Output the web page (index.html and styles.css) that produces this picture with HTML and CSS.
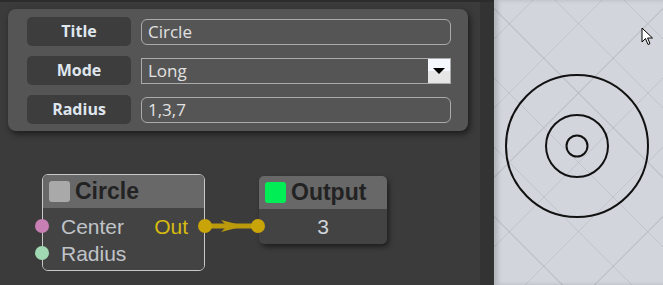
FILE: index.html
```html
<!DOCTYPE html>
<html lang="en">
<head>
    <meta charset="UTF-8">
    <title>Node Editor</title>
    <link rel="stylesheet" href="styles.css">
</head>
<body>
    <div class="editor">
        <div class="props">
            <div class="prop-row">
                <div class="prop-label">Title</div>
                <div class="prop-input">Circle</div>
            </div>
            <div class="prop-row">
                <div class="prop-label">Mode</div>
                <div class="prop-input prop-select">
                    <span>Long</span>
                    <span class="select-btn"><span class="select-arrow"></span></span>
                </div>
            </div>
            <div class="prop-row">
                <div class="prop-label">Radius</div>
                <div class="prop-input">1,3,7</div>
            </div>
        </div>

        <!-- link between nodes -->
        <svg class="links" width="494" height="285">
            <line x1="206" y1="226" x2="259" y2="226" stroke="#bb9a0c" stroke-width="5"/>
            <polygon points="221,220 244,226 221,232 227,226" fill="#bb9a0c"/>
        </svg>

        <div class="node node-circle">
            <div class="node-head">
                <span class="node-check"></span>
                <span class="node-title">Circle</span>
            </div>
            <div class="node-body">
                <div class="node-row">
                    <span class="port port-in port-pink"></span>
                    <span>Center</span>
                    <span class="out-label">Out</span>
                    <span class="port port-out"></span>
                </div>
                <div class="node-row">
                    <span class="port port-in port-green"></span>
                    <span>Radius</span>
                </div>
            </div>
        </div>

        <div class="node node-output">
            <div class="node-head">
                <span class="node-check check-on"></span>
                <span class="node-title">Output</span>
            </div>
            <div class="node-body">
                <div class="node-row value-row">
                    <span class="port port-in port-yellow"></span>
                    <span>3</span>
                </div>
            </div>
        </div>
    </div>

    <div class="preview">
        <svg class="rings" width="169" height="285">
            <circle cx="83" cy="146" r="71" fill="none" stroke="#111" stroke-width="2"/>
            <circle cx="83" cy="146" r="31" fill="none" stroke="#111" stroke-width="2"/>
            <circle cx="83" cy="146" r="10.5" fill="none" stroke="#111" stroke-width="2"/>
        </svg>
        <svg class="cursor" width="14" height="20" viewBox="0 0 14 20">
            <path d="M1 1 L1 15 L4.5 11.5 L7 17.5 L9 16.6 L6.6 11 L11.5 11 Z" fill="#fff" stroke="#000" stroke-width="1"/>
        </svg>
    </div>
</body>
</html>
```

FILE: styles.css
```css
:root {
    --editor-bg: #3b3b3b;
    --panel-bg: #555;
    --label-bg: #3d3d3d;
    --node-head: #686868;
    --node-body: #434343;
    --link-color: #c9a408;
}

body {
    margin: 0;
    display: flex;
    width: 663px;
    height: 285px;
    overflow: hidden;
    font-family: 'Open Sans', sans-serif;
}

.editor {
    position: relative;
    width: 494px;
    height: 285px;
    background-color: var(--editor-bg);
    border-top: 2px solid #2c2c2c;
    box-sizing: border-box;
    box-shadow: inset -14px 0 0 #333;
}

/* Property panel */
.props {
    margin: 7px 0 0 8px;
    width: 460px;
    height: 122px;
    box-sizing: border-box;
    padding: 8px 17px 7px 19px;
    background-color: var(--panel-bg);
    border-radius: 8px;
    box-shadow: 2px 3px 6px rgba(0, 0, 0, 0.55);
    display: flex;
    flex-direction: column;
    gap: 10px;
}

.prop-row {
    display: flex;
    align-items: center;
    gap: 10px;
    height: 29px;
}

.prop-label {
    width: 104px;
    height: 29px;
    line-height: 29px;
    text-align: center;
    background-color: var(--label-bg);
    border-radius: 5px;
    color: #dfe6ee;
    font-weight: bold;
    font-size: 16px;
}

.prop-input {
    width: 310px;
    height: 26px;
    box-sizing: border-box;
    border: 1px solid #aaa;
    border-radius: 6px;
    padding: 0 6px;
    line-height: 24px;
    color: #e2e2e2;
    font-size: 17px;
}

.prop-select {
    display: flex;
    justify-content: space-between;
    border-radius: 0;
    padding-right: 0;
}

.select-btn {
    width: 22px;
    height: 24px;
    background: linear-gradient(#f6f8ff 50%, #e6e6e6 50%);
    display: flex;
    align-items: center;
    justify-content: center;
}

.select-arrow {
    width: 0;
    height: 0;
    border-left: 6px solid transparent;
    border-right: 6px solid transparent;
    border-top: 6px solid #000;
}

.links {
    position: absolute;
    left: 0;
    top: -2px;
}

/* Nodes */
.node {
    position: absolute;
    border-radius: 6px;
    font-family: 'Liberation Sans', Arial, sans-serif;
}

.node-circle {
    left: 42px;
    top: 172px;
    width: 163px;
    border: 1.5px solid #c8c8c8;
    box-sizing: border-box;
}

.node-output {
    left: 259px;
    top: 174px;
    width: 128px;
    box-shadow: 2px 3px 5px rgba(0, 0, 0, 0.5);
}

.node-head {
    height: 33px;
    display: flex;
    align-items: center;
    gap: 5px;
    padding-left: 6px;
    background-color: var(--node-head);
    border-radius: 5px 5px 0 0;
}

.node-check {
    width: 21px;
    height: 21px;
    border-radius: 3px;
    background-color: #a9a9a9;
}

.check-on {
    background-color: #00ee55;
}

.node-title {
    font-weight: bold;
    font-size: 23px;
    color: #222;
}

.node-body {
    position: relative;
    background-color: var(--node-body);
    border-radius: 0 0 5px 5px;
    padding: 5px 0 3px;
}

.node-output .node-body {
    padding: 4px 0 4px;
}

.node-row {
    position: relative;
    display: flex;
    align-items: center;
    height: 27px;
    padding-left: 18px;
    font-size: 21px;
    color: #c0c4c8;
}

.value-row {
    justify-content: center;
    padding-left: 0;
    color: #d0d4d8;
}

.out-label {
    margin-left: auto;
    margin-right: 16px;
    color: #d8bb10;
}

.port {
    position: absolute;
    width: 14px;
    height: 14px;
    border-radius: 50%;
    top: 6px;
}

.port-in {
    left: -8px;
}

.port-out {
    right: -8px;
    background-color: var(--link-color);
}

.port-pink {
    background-color: #c77fb4;
}

.port-green {
    background-color: #9fd8b2;
}

.port-yellow {
    background-color: var(--link-color);
}

/* Preview pane */
.preview {
    position: relative;
    width: 169px;
    height: 285px;
    background-color: #d2d6dc;
    background-image:
        repeating-linear-gradient(45deg, transparent 0 48px, rgba(160, 165, 172, 0.35) 48px 49px),
        repeating-linear-gradient(-45deg, transparent 0 48px, rgba(160, 165, 172, 0.35) 48px 49px);
    box-shadow: inset 4px 0 4px rgba(0, 0, 0, 0.15);
}

.rings {
    display: block;
}

.cursor {
    position: absolute;
    left: 147px;
    top: 27px;
}
```
